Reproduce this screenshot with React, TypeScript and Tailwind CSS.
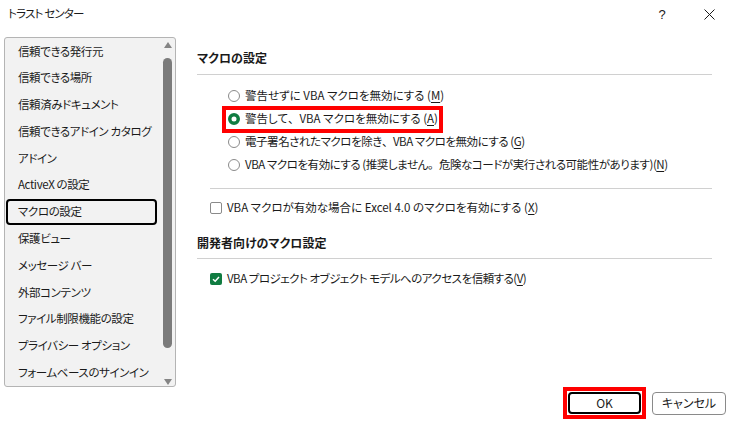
import React from "react";

const items = [
  "信頼できる発行元",
  "信頼できる場所",
  "信頼済みドキュメント",
  "信頼できるアドイン カタログ",
  "アドイン",
  "ActiveX の設定",
  "マクロの設定",
  "保護ビュー",
  "メッセージ バー",
  "外部コンテンツ",
  "ファイル制限機能の設定",
  "プライバシー オプション",
  "フォームベースのサインイン",
];

function Radio({ checked }: { checked?: boolean }) {
  return (
    <svg width="12" height="12" viewBox="0 0 12 12" className="shrink-0">
      {checked ? (
        <circle cx="6" cy="6" r="4.25" fill="#fff" stroke="#107c41" strokeWidth="3.5" />
      ) : (
        <circle cx="6" cy="6" r="5.5" fill="#fff" stroke="#8a8a8a" strokeWidth="1" />
      )}
    </svg>
  );
}

function Check({ checked }: { checked?: boolean }) {
  if (checked)
    return (
      <div className="w-[12px] h-[12px] rounded-[2px] bg-[#107c41] flex items-center justify-center shrink-0">
        <svg width="10" height="10" viewBox="0 0 10 10">
          <path d="M2 5.2 L4.2 7.2 L8 3" fill="none" stroke="#fff" strokeWidth="1.5" />
        </svg>
      </div>
    );
  return <div className="w-[12px] h-[12px] rounded-[2px] border border-[#8a8a8a] bg-white shrink-0" />;
}

function Key({ k }: { k: string }) {
  return (
    <>
      (<span className="underline underline-offset-[2px]">{k}</span>)
    </>
  );
}

function P({ c }: { c: string }) {
  return <span className="[font-feature-settings:normal]">{c}</span>;
}

export default function App() {
  return (
    <div className="w-[732px] h-[421px] bg-white flex flex-col text-[11.5px] text-[#1a1a1a] font-['Noto_Sans_CJK_JP',sans-serif] [font-feature-settings:'palt'] leading-none overflow-hidden whitespace-nowrap">
      {/* title bar */}
      <div className="h-[28px] flex items-center pl-[8px]">
        <span className="flex-1 tracking-[-0.8px]">トラスト センター</span>
        <span className="text-[13px] w-[10px] text-center mr-[37px] font-['Liberation_Sans',sans-serif]">?</span>
        <svg width="11" height="11" viewBox="0 0 11 11" className="mr-[17px]">
          <path d="M0.5 0.5 L10.5 10.5 M10.5 0.5 L0.5 10.5" stroke="#1a1a1a" strokeWidth="1" />
        </svg>
      </div>

      {/* body */}
      <div className="flex pt-[9px]">
        {/* list */}
        <div className="ml-[4px] w-[172px] h-[350px] border border-[#b4b4b4] rounded-[3px] bg-[#f2f2f2] flex">
          <div className="flex flex-col w-[155px] tracking-[-0.4px]">
            {items.map((t, i) =>
              i === 6 ? (
                <div
                  key={t}
                  className="ml-[1px] w-[151px] h-[27px] flex items-center pl-[10px] border-2 border-black rounded-[4px] bg-[#f2f2f2]"
                >
                  {t}
                </div>
              ) : (
                <div key={t} className="ml-[1px] w-[151px] h-[27px] flex items-center pl-[12px]">
                  {t}
                </div>
              )
            )}
          </div>
          <div className="flex-1 flex flex-col items-center pt-[4px]">
            <svg width="8" height="6" viewBox="0 0 8 6">
              <path d="M4 0 L8 6 L0 6 Z" fill="#858585" />
            </svg>
            <div className="mt-[10px] w-[9px] h-[290px] rounded-[4.5px] bg-[#7b7b7b]" />
            <svg width="8" height="6" viewBox="0 0 8 6" className="mt-[31px]">
              <path d="M0 0 L8 0 L4 6 Z" fill="#858585" />
            </svg>
          </div>
        </div>

        {/* right */}
        <div className="ml-[21px] w-[515px] flex flex-col pt-[11px]">
          <div className="h-[20px] flex items-center font-bold text-[12px]">マクロの設定</div>
          <div className="mt-[6px] border-t border-[#d0d0d0]" />
          <div className="mt-[9px] pl-[31px] flex flex-col">
            <div className="h-[23px] flex items-center gap-[5px]">
              <Radio />
              <span>
                警告せずに VBA マクロを無効にする <Key k="M" />
              </span>
            </div>
            <div className="h-[23px] flex items-center gap-[5px] relative">
              <div className="absolute left-[-6px] top-[-1px] w-[221px] h-[27px] border-4 border-[#ff0000]" />
              <Radio checked />
              <span>
                警告して<P c="、" />VBA マクロを無効にする <Key k="A" />
              </span>
            </div>
            <div className="h-[23px] flex items-center gap-[5px]">
              <Radio />
              <span className="tracking-[-0.45px]">
                電子署名されたマクロを除き<P c="、" />VBA マクロを無効にする <Key k="G" />
              </span>
            </div>
            <div className="h-[23px] flex items-center gap-[5px]">
              <Radio />
              <span className="tracking-[-0.45px]">
                VBA マクロを有効にする (推奨しません<P c="。" />危険なコードが実行される可能性があります)
                <Key k="N" />
              </span>
            </div>
          </div>
          <div className="mt-[12px] ml-[13px] border-t border-[#d0d0d0]" />
          <div className="mt-[9px] h-[20px] pl-[13px] flex items-center gap-[5px]">
            <Check />
            <span>
              VBA マクロが有効な場合に Excel 4.0 のマクロを有効にする <Key k="X" />
            </span>
          </div>
          <div className="mt-[15px] h-[20px] flex items-center font-bold text-[12px]">開発者向けのマクロ設定</div>
          <div className="mt-[5px] border-t border-[#d0d0d0]" />
          <div className="mt-[10px] h-[20px] pl-[13px] flex items-center gap-[5px]">
            <Check checked />
            <span className="tracking-[-0.5px]">
              VBA プロジェクト オブジェクト モデルへのアクセスを信頼する
              <Key k="V" />
            </span>
          </div>
        </div>
      </div>

      {/* footer */}
      <div className="flex justify-end items-center h-[32px] pr-[6px] gap-[6px] text-[12px]">
        <div className="w-[83px] h-[32px] border-4 border-[#ff0000] p-[1px]">
          <div className="w-full h-full border-2 border-black rounded-[4px] flex items-center justify-center">OK</div>
        </div>
        <div className="w-[74px] h-[23px] border border-[#8a8a8a] rounded-[4px] flex items-center justify-center">
          キャンセル
        </div>
      </div>
    </div>
  );
}
